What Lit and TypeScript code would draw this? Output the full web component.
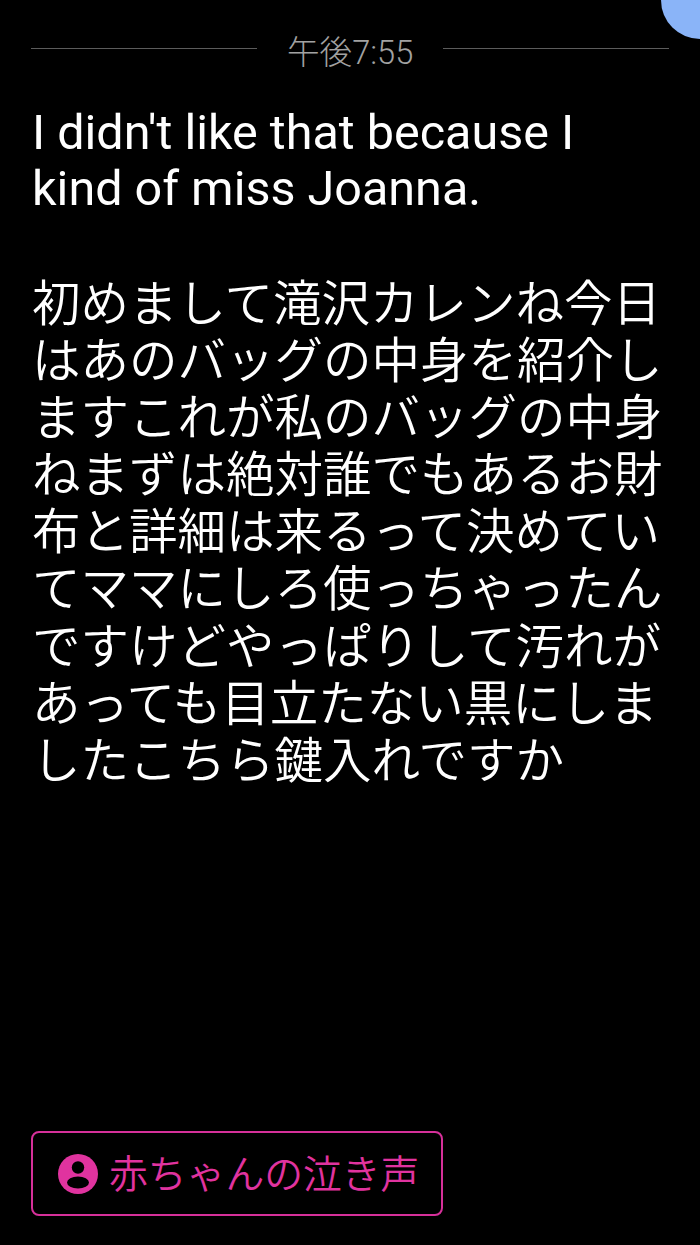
import { LitElement, html, css } from "lit";
import { customElement } from "lit/decorators.js";

const CJK = ["初めまして滝沢カレンね今日","はあのバッグの中身を紹介し","ますこれが私のバッグの中身","ねまずは絶対誰でもあるお財","布と詳細は来るって決めてい","てママにしろ使っちゃったん","ですけどやっぱりして汚れが","あっても目立たない黒にしま","したこちら鍵入れですか"];

@customElement("app-root")
export class AppRoot extends LitElement {
  static styles = css`
    :host { display: block; position: relative; width: 700px; height: 1245px; background: #000; overflow: hidden; font-family: Roboto, "Noto Sans CJK JP", sans-serif; }
    .page { box-sizing: border-box; height: 1245px; display: flex; flex-direction: column; padding: 30px 31px 29px 31px; }
    .head { display: flex; align-items: center; gap: 30px; height: 37px; color: #a2a2a2; font-size: 32.6px; font-weight: 300; }
    .head span { width: 126px; white-space: nowrap; text-align: center; padding-top: 1px; }
    .line { flex: 1; height: 1px; background: #5c5c5c; }
    .body { color: #fff; font-size: 48.5px; margin-top: 38px; flex: 1; padding-left: 1px; }
    .latin { line-height: 56px; }
    .gap { height: 59px; }
    .cjk { white-space: nowrap; line-height: 57.1px; font-weight: 350; }
    .btn { align-self: flex-start; box-sizing: border-box; width: 412px; height: 85px; border: 2px solid #d6309a; border-radius: 8px; display: flex; align-items: center; gap: 11px; padding-left: 25px; color: #e0339f; font-size: 38.8px; font-weight: 350; }
    .btn svg { width: 40px; height: 40px; flex: none; }
    .btn span { position: relative; top: -3px; white-space: nowrap; }
    .dot { position: absolute; top: -39px; right: -39px; width: 78px; height: 78px; border-radius: 50%; background: #8ab4f8; }
  `;
  render() {
    return html`<div class="page">
      <div class="head"><div class="line"></div><span>午後7:55</span><div class="line"></div></div>
      <div class="body">
        <div class="latin">I didn't like that because I<br>kind of miss Joanna.</div>
        <div class="gap"></div>
        <div class="cjk">${CJK.map((l) => html`<div>${l}</div>`)}</div>
      </div>
      <div class="btn"><svg viewBox="0 0 40 40"><circle cx="20" cy="20" r="20" fill="#e0339f"/><circle cx="20" cy="13.5" r="6.2" fill="#000"/><ellipse cx="20" cy="28.5" rx="11" ry="6" fill="#000"/></svg><span>赤ちゃんの泣き声</span></div>
    </div><div class="dot"></div>`;
  }
}
